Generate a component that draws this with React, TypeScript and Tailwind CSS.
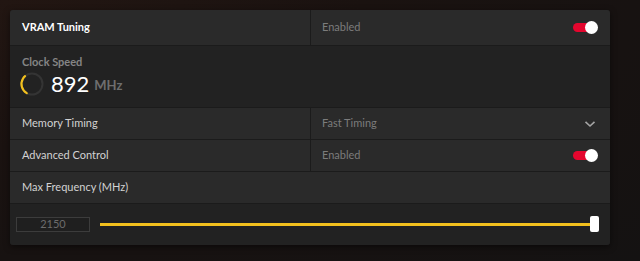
import React from "react"

const font = { fontFamily: 'Lato, "Open Sans", sans-serif' }

function Toggle() {
  return (
    <div className="relative w-[25px] h-[13px] flex items-center">
      <div className="w-[20px] h-[9px] rounded-full bg-[#e4062e]" />
      <div className="absolute right-0 top-0 w-[13px] h-[13px] rounded-full bg-white" />
    </div>
  )
}

function Chevron() {
  return (
    <svg width="12" height="8" viewBox="0 0 12 8" className="mr-[2px]">
      <path d="M1.5 1.8 L6 6 L10.5 1.8" fill="none" stroke="#a4a4a4" strokeWidth="1.6" />
    </svg>
  )
}

function SplitRow({
  label,
  value,
  bold,
  right,
  height,
}: {
  label: string
  value: string
  bold?: boolean
  right: React.ReactNode
  height: string
}) {
  return (
    <div className={`flex ${height} gap-px`}>
      <div
        className={`w-[300px] bg-[#2a2a2a] flex items-center pl-[12px] text-[11px] ${
          bold ? "font-bold text-white" : "text-[#d2d2d2]"
        }`}
      >
        {label}
      </div>
      <div className="flex-1 bg-[#2a2a2a] flex items-center justify-between pl-[11px] pr-[12px] text-[11px] text-[#7c7c7c]">
        <span>{value}</span>
        {right}
      </div>
    </div>
  )
}

function ClockArc() {
  // 왼쪽 노란 호가 있는 링
  const r = 10.5
  const c = 2 * Math.PI * r
  return (
    <svg width="26" height="26" viewBox="0 0 26 26">
      <circle cx="13" cy="13" r={r} fill="none" stroke="#343434" strokeWidth="2" />
      <circle
        cx="13"
        cy="13"
        r={r}
        fill="none"
        stroke="#f2c01e"
        strokeWidth="2.2"
        strokeDasharray={`${c * 0.3} ${c}`}
        transform="rotate(120 13 13)"
        strokeLinecap="round"
      />
    </svg>
  )
}

export default function App() {
  return (
    <div
      className="w-[640px] h-[261px] pt-[10px] pl-[10px] bg-[radial-gradient(ellipse_at_top_left,#221612,#1a1210_40%,#141212_100%)]"
      style={font}
    >
      <div className="w-[600px] rounded-[3px] overflow-hidden bg-[#1b1b1b] flex flex-col gap-px shadow-[0_2px_6px_rgba(0,0,0,0.5)]">
        <SplitRow label="VRAM Tuning" value="Enabled" bold right={<Toggle />} height="h-[35px]" />

        {/* 클럭 속도 */}
        <div className="h-[61px] bg-[#222222] pl-[12px] pt-[9px]">
          <div className="text-[11px] font-bold text-[#858585] leading-[14px]">Clock Speed</div>
          <div className="flex items-center mt-[1px]">
            <div className="-ml-[3px]">
              <ClockArc />
            </div>
            <span className="ml-[6px] text-[22px] text-white leading-[28px]">892</span>
            <span className="ml-[5px] text-[13px] font-bold text-[#6e6e6e] mt-[4px]">MHz</span>
          </div>
        </div>

        <SplitRow label="Memory Timing" value="Fast Timing" right={<Chevron />} height="h-[31px]" />
        <SplitRow label="Advanced Control" value="Enabled" right={<Toggle />} height="h-[31px]" />

        <div className="h-[31px] bg-[#2a2a2a] flex items-center pl-[12px] text-[11px] text-[#d2d2d2]">
          Max Frequency (MHz)
        </div>

        {/* 슬라이더 */}
        <div className="h-[41px] bg-[#222222] flex items-center pl-[6px] pr-[11px] pb-[1px]">
          <div className="w-[74px] h-[15px] border border-[#3c3c3c] bg-[#1f1f1f] flex items-center justify-center text-[11px] text-[#6c6c6c]">
            2150
          </div>
          <div className="flex-1 ml-[10px] relative h-[16px] flex items-center">
            <div className="w-full h-[3px] bg-[#f2c01e]" />
            <div className="absolute right-0 top-0 w-[9px] h-[16px] rounded-[2px] bg-white" />
          </div>
        </div>
      </div>
    </div>
  )
}
